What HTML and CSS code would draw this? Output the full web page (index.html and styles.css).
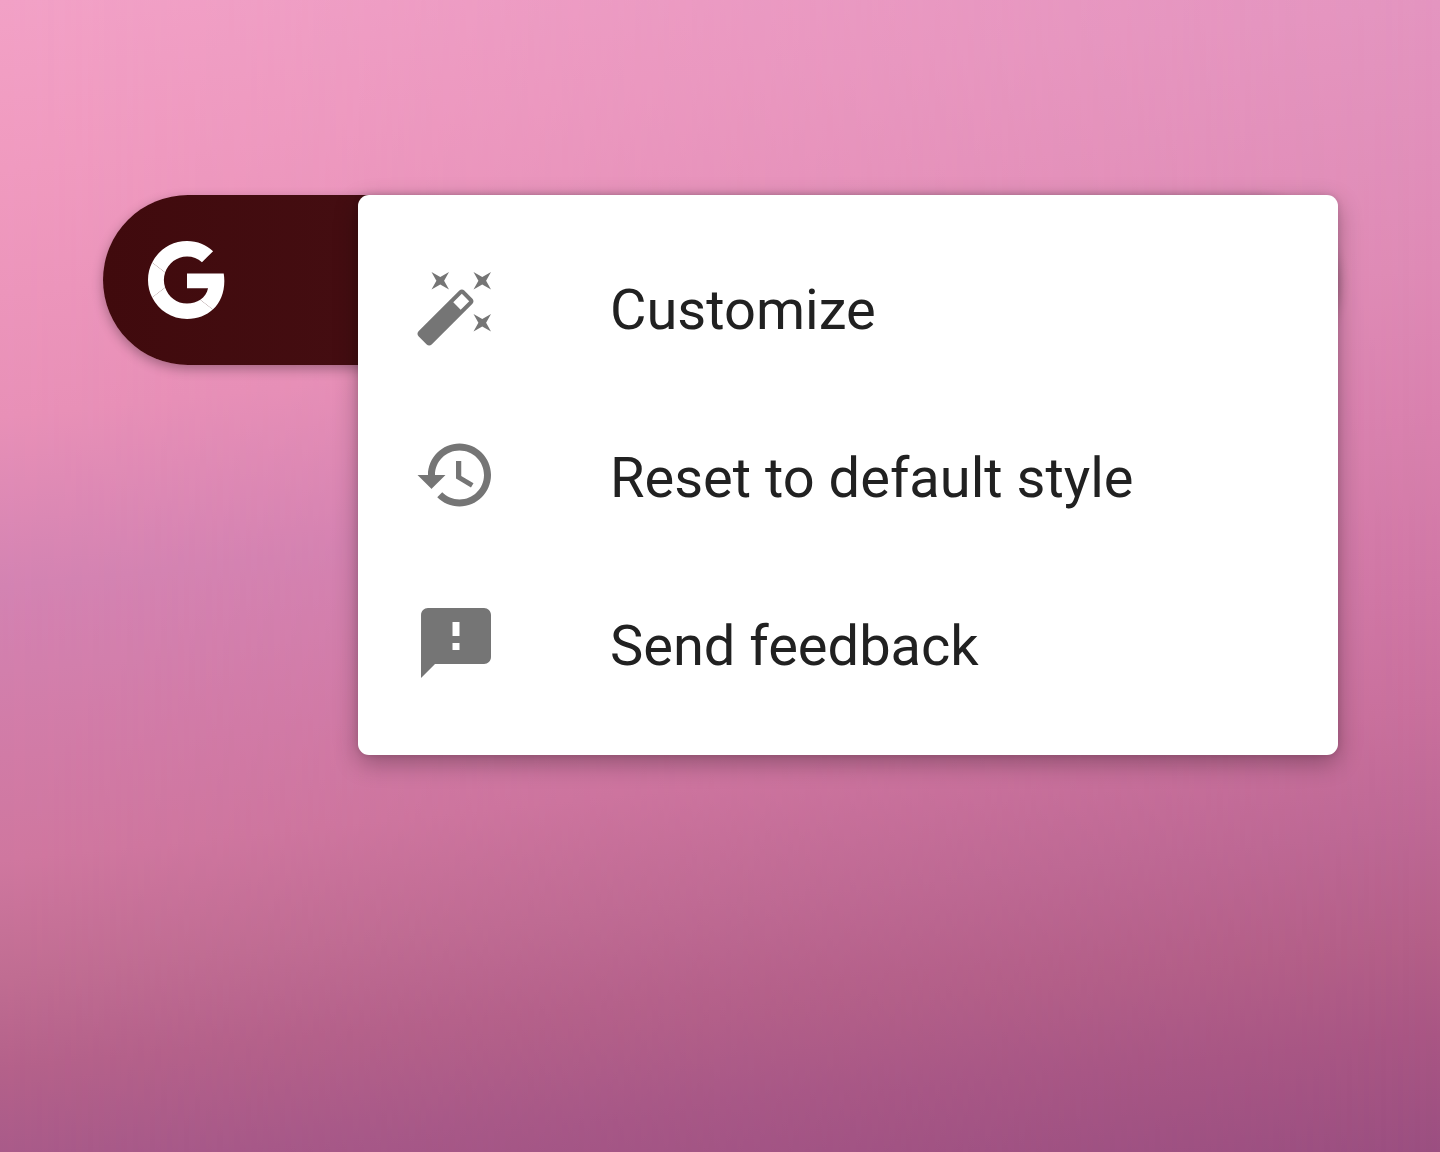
FILE: index.html
```html
<!DOCTYPE html>
<html lang="en">

<head>
    <meta charset="UTF-8">
    <meta name="viewport" content="width=device-width, initial-scale=1.0">
    <title>Search widget</title>
    <link rel="stylesheet" href="styles.css">
</head>

<body>
    <main class="home">
        <div class="search_bar">
            <a class="logo" href="#" aria-label="Google">
                <svg viewBox="0 0 48 48" aria-hidden="true">
                    <path d="M24 9.5c3.54 0 6.71 1.22 9.21 3.6l6.85-6.85C35.9 2.38 30.47 0 24 0 14.62 0 6.51 5.38 2.56 13.22l7.98 6.19C12.43 13.72 17.74 9.5 24 9.5z"/>
                    <path d="M46.98 24.55c0-1.57-.15-3.09-.38-4.55H24v9.02h12.94c-.58 2.96-2.26 5.48-4.78 7.18l7.73 6c4.51-4.18 7.09-10.36 7.09-17.65z"/>
                    <path d="M10.53 28.59c-.48-1.45-.76-2.99-.76-4.59s.27-3.14.76-4.59l-7.98-6.19C.92 16.46 0 20.12 0 24c0 3.88.92 7.54 2.56 10.78l7.97-6.19z"/>
                    <path d="M24 48c6.48 0 11.93-2.13 15.89-5.81l-7.73-6c-2.15 1.45-4.92 2.3-8.16 2.3-6.26 0-11.57-4.22-13.47-9.91l-7.98 6.19C6.51 42.62 14.62 48 24 48z"/>
                </svg>
            </a>

            <!-- long press menu, lies over the bar -->
            <div class="menu">
                <button type="button" class="menu_item">
                    <svg class="icon" viewBox="0 0 24 24" aria-hidden="true">
                        <path d="M7.5 5.6L10 7 8.6 4.5 10 2 7.5 3.4 5 2l1.4 2.5L5 7zm12 9.8L17 14l1.4 2.5L17 19l2.5-1.4L22 19l-1.4-2.5L22 14zM22 2l-2.5 1.4L17 2l1.4 2.5L17 7l2.5-1.4L22 7l-1.4-2.5zm-7.63 5.29c-.39-.39-1.02-.39-1.41 0L1.29 18.96c-.39.39-.39 1.02 0 1.41l2.34 2.34c.39.39 1.02.39 1.41 0L16.7 11.05c.39-.39.39-1.02 0-1.41l-2.33-2.35zm-1.03 5.49l-2.12-2.12 2.44-2.44 2.12 2.12-2.44 2.44z"/>
                    </svg>
                    <span class="label">Customize</span>
                </button>
                <button type="button" class="menu_item">
                    <svg class="icon" viewBox="0 0 24 24" aria-hidden="true">
                        <path d="M13 3c-4.97 0-9 4.03-9 9H1l3.89 3.89.07.14L9 12H6c0-3.87 3.13-7 7-7s7 3.13 7 7-3.13 7-7 7c-1.93 0-3.68-.79-4.94-2.06l-1.42 1.42C8.27 19.99 10.51 21 13 21c4.97 0 9-4.03 9-9s-4.03-9-9-9zm-1 5v5l4.28 2.54.72-1.21-3.5-2.08V8H12z"/>
                    </svg>
                    <span class="label">Reset to default style</span>
                </button>
                <button type="button" class="menu_item">
                    <svg class="icon" viewBox="0 0 24 24" aria-hidden="true">
                        <path d="M20 2H4c-1.1 0-1.99.9-1.99 2L2 22l4-4h14c1.1 0 2-.9 2-2V4c0-1.1-.9-2-2-2zm-7 12h-2v-2h2v2zm0-4h-2V6h2v4z"/>
                    </svg>
                    <span class="label">Send feedback</span>
                </button>
            </div>
        </div>
    </main>
</body>

</html>
```

FILE: styles.css
```css
* {
    margin: 0;
    padding: 0;
    box-sizing: border-box;
    font-family: Roboto, Arial, sans-serif;
}

/* wallpaper: right edge colours here, left edge colours faded in on top */
body {
    position: relative;
    min-height: 100vh;
    background: linear-gradient(174deg, #e698c4 0%, #e495c0 12%, #df8bb6 32%, #da82af 43%, #d077a5 57%, #c9709d 66%, #be6895 75%, #b45f88 84%, #a95684 91%, #9b4f81 100%);
}

body::before {
    content: "";
    position: absolute;
    inset: 0;
    background: linear-gradient(174deg, #f2a1c6 0%, #f09abf 13%, #e890b7 32%, #d383b2 45%, #d17ba6 58%, #cf779f 66%, #c06d92 75%, #b4618a 82%, #a65989 90%, #9c5183 100%);
    -webkit-mask-image: linear-gradient(to right, #000, transparent);
    mask-image: linear-gradient(to right, #000, transparent);
}

.home {
    position: relative;
    padding: 195px 102px 0 103px;
}

.search_bar {
    position: relative;
    display: flex;
    align-items: center;
    height: 170px;
    padding: 0 45px;
    border-radius: 85px;
    background: linear-gradient(to right, #400a0d, #450e12 25%);
    box-shadow: 0 4px 12px rgba(0, 0, 0, 0.3);
}

.logo svg {
    display: block;
    width: 78px;
    height: 78px;
    fill: #fff;
}

.menu {
    position: absolute;
    top: 0;
    right: 0;
    width: 980px;
    max-width: 100%;
    padding: 28px 0;
    border-radius: 11px;
    background-color: #fff;
    box-shadow: 0 8px 24px rgba(0, 0, 0, 0.3), 0 0 6px rgba(0, 0, 0, 0.12);
}

.menu_item {
    display: flex;
    align-items: center;
    gap: 112px;
    width: 100%;
    height: 168px;
    padding: 0 56px;
    border: none;
    background: none;
    color: #212121;
    font-size: 56px;
    text-align: left;
    cursor: pointer;
}

.label {
    padding-top: 6px;
}

.icon {
    flex: none;
    width: 84px;
    height: 84px;
    fill: #757575;
}
```
